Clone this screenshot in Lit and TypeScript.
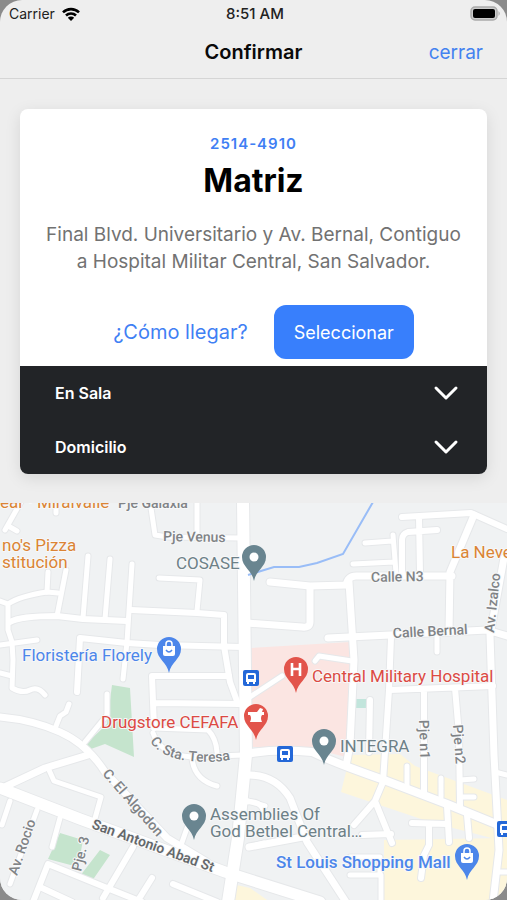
import { LitElement, html, svg, css } from "lit";
import { customElement, state } from "lit/decorators.js";

type Point = [number, number];

const ROADS: { w: number; d: string }[] = [
  // west blocks
  { w: 5, d: "M22 500 5 530M10 527 17 531M56 500V513M151 508 155 535 168 537 240 538M197 500V532" },
  { w: 5, d: "M88 556 83 618M110 559 105 619M132 564 127 642 123 679M48 572 47 592M66 570 57 616" },
  { w: 5, d: "M0 601 8 604Q20 596 47 592L58 593M8 604 8 630 12 642 13 660 12 688Q22 694 30 690T45 695" },
  { w: 6, d: "M10 622Q20 616 57 616L83 619 127 621M131 610 197 613 224 615V646L230 682 238 704" },
  { w: 5, d: "M159 578 200 580 197 611M0 645 37 640M0 673 12 676" },
  { w: 6, d: "M77 692 80 638 127 643 160 645 243 647M229 676H152L154 728M155 703 243 704" },
  { w: 5, d: "M154 728 208 730Q216 738 217 752M69 704 66 712 60 716 56 726M107 694V715L85 742" },
  { w: 5, d: "M153 733Q160 755 192 757L243 755M192 758Q194 780 217 786M187 828 180 848" },
  { w: 7, d: "M0 717Q33 720 60 732T105 772L167 838 207 862M0 789 45 768 88 755" },
  { w: 5, d: "M49 770 54 781 101 797 94 822M10 801 2 825M37 810 10 884M60 818 52 847" },
  { w: 6, d: "M33 902 48 864 107 888 142 902M42 888 72 902M133 847 103 898M152 878 137 902M173 884 217 902" },
  { w: 5, d: "M245 800 265 806M252 846 264 843M245 623H249" },
  // north-east blocks
  { w: 6, d: "M402 517 471 513 507 529M419 517 420 574M437 530 408 532Q402 534 402 540V574" },
  { w: 5, d: "M365 543 392 541M393 535 396 573M353 564 394 562M437 636V652M315 661 319 656 352 661" },
  { w: 7, d: "M474 515 450 572 449 632M270 582 310 586 346 585Q348 576 356 576H452" },
  { w: 7, d: "M310 587V622Q310 628 302 627L247 623M349 582 354 660 350 745 346 766" },
  { w: 7, d: "M504 558 490 635 494 755 499 850 493 902M328 638 390 635 487 630 507 636" },
  { w: 6, d: "M391 637 389 690 383 782 375 801 392 843M375 801 354 825M391 834 362 835" },
  { w: 6, d: "M390 690 493 686M424 690V795M455 688 459 735 460 806M370 700 369 752" },
  { w: 5, d: "M250 697 282 676M407 766V786M441 778V797M460 780 474 779M460 797H474" },
  // south-east blocks
  { w: 8, d: "M246 754Q277 748 312 752 335 763 384 780L447 804 496 824" },
  { w: 6, d: "M447 806 449 842M467 815 469 838M412 823 447 824M429 825V845L424 855 421 878" },
  { w: 7, d: "M247 775Q275 774 290 798L307 842 346 902M249 847 308 836" },
  { w: 5, d: "M247 802Q262 800 265 815M350 875H381V902M350 857H380V875M495 772 507 775M499 872H507" },
  // main avenues
  { w: 11, d: "M0 788 80 819 225 872 320 902" },
  { w: 12, d: "M243 500 246 755 238 838 228 902" },
];

const shopGlyph = svg`<path d="M-6-3H6V5Q6 7 4 7H-4Q-6 7-6 5Z" fill="#fff"/><path d="M-3-3V-5A3 3 0 0 1 3-5V-3" fill="none" stroke="#fff" stroke-width="1.5"/><path d="M-3 1Q0 5 3 1" fill="none" stroke="#4c86ea" stroke-width="1.4"/>`;
const dotGlyph = svg`<circle r="4.5" fill="#fff"/>`;
const hospitalGlyph = svg`<path d="M-4-6V7M4-6V7M-4 0H4" fill="none" stroke="#fff" stroke-width="2.6"/>`;
const mortarGlyph = svg`<path d="M-8-4H1L4-8 7-7 6-4H8V-1H6Q4 2 6 6H-6Q-4 2-6-1H-8Z" fill="#fff"/>`;

const PINS: { at: Point; color: string; glyph: unknown }[] = [
  { at: [254, 557], color: "#698590", glyph: dotGlyph },
  { at: [324, 741], color: "#698590", glyph: dotGlyph },
  { at: [194, 816], color: "#698590", glyph: dotGlyph },
  { at: [169, 649], color: "#4c86ea", glyph: shopGlyph },
  { at: [467, 856], color: "#4c86ea", glyph: shopGlyph },
  { at: [296, 669], color: "#e2544b", glyph: hospitalGlyph },
  { at: [256, 716], color: "#e2544b", glyph: mortarGlyph },
];

const STATIONS: Point[] = [[251, 678], [285, 754], [505, 829]];

const LABELS: { t: string; x: number; y: number; c: string; r?: number }[] = [
  { t: "ear · Miralvalle", x: 0, y: 508, c: "food" },
  { t: "Pje Galaxia", x: 118, y: 508, c: "street" },
  { t: "no's Pizza", x: 2, y: 551, c: "food" },
  { t: "stitución", x: 2, y: 568, c: "food" },
  { t: "La Neve", x: 451, y: 558, c: "food" },
  { t: "Pje Venus", x: 163, y: 541, c: "street", r: 1 },
  { t: "COSASE", x: 176, y: 569, c: "place" },
  { t: "Calle N3", x: 371, y: 582, c: "street", r: -1 },
  { t: "Calle Bernal", x: 393, y: 638, c: "street", r: -3 },
  { t: "Av. Izalco", x: 494, y: 633, c: "street", r: -84 },
  { t: "Floristería Florely", x: 22, y: 661, c: "shop" },
  { t: "Central Military Hospital", x: 312, y: 682, c: "health" },
  { t: "Drugstore CEFAFA", x: 101, y: 728, c: "health" },
  { t: "INTEGRA", x: 340, y: 752, c: "place" },
  { t: "Pje n1", x: 419, y: 720, c: "street", r: 88 },
  { t: "Pje n2", x: 453, y: 725, c: "street", r: 86 },
  { t: "Assemblies Of", x: 210, y: 820, c: "place" },
  { t: "God Bethel Central…", x: 210, y: 837, c: "place" },
  { t: "St Louis Shopping Mall", x: 276, y: 868, c: "shop strong" },
  { t: "C. El Algodon", x: 102, y: 774, c: "street", r: 49 },
  { t: "San Antonio Abad St", x: 91, y: 828, c: "avenue", r: 20 },
  { t: "Av. Rocio", x: 17, y: 876, c: "street", r: -71 },
  { t: "Pje. 3", x: 81, y: 872, c: "street", r: -76 },
];

@customElement("branch-map")
class BranchMap extends LitElement {
  static styles = css`
    :host { display: block; position: relative; overflow: hidden; background: #f0f2f3; }
    .map { position: absolute; inset: 0; width: 100%; height: 100%; }
    .casing { fill: none; stroke: #e6e8ea; stroke-linecap: round; stroke-linejoin: round; }
    .road { fill: none; stroke: #fff; stroke-linecap: round; stroke-linejoin: round; }
    .label {
      font: 400 17px Roboto, "Liberation Sans", sans-serif;
      paint-order: stroke;
      stroke: #f7f8f9;
      stroke-width: 2px;
      stroke-linejoin: round;
    }
    .food { fill: #db8434; }
    .shop { fill: #4c86ea; }
    .health { fill: #dc4a43; }
    .place { fill: #6d8087; }
    .street { fill: #808386; font-size: 14px; font-weight: 500; }
    .avenue { fill: #65686b; font-size: 14px; font-weight: 600; }
    .strong { font-weight: 500; }
  `;

  render() {
    return html`
      <svg class="map" viewBox="0 503 507 397" preserveAspectRatio="xMidYMin slice" role="img" aria-label="Mapa de la sucursal">
        <path fill="#fbe5e2" d="M251 648 350 642V758L310 748 251 747Z" />
        <path fill="#c5e4cd" d="M112 685 130 688 134 757 105 744 88 750 85 745 107 724ZM60 833 83 840 78 867 48 859ZM100 850 110 855 92 881 80 876Z" />
        <path fill="#c2e5dc" d="M356 699H367V708H356Z" />
        <path fill="#fdf6dc" d="M352 755 400 754 415 766 507 800V842L430 822 341 792 347 768ZM384 840 507 838V900H384ZM232 884 250 888 270 902H228Z" />
        ${ROADS.map((r) => svg`<path class="casing" stroke-width=${r.w + 2} d=${r.d} />`)}
        ${ROADS.map((r) => svg`<path class="road" stroke-width=${r.w} d=${r.d} />`)}
        <path fill="none" stroke="#99bdf7" stroke-width="2" d="M373 502 343 554 317 563 299 567H274L248 575" />
        ${STATIONS.map(
          ([x, y]) => svg`<g transform="translate(${x} ${y})">
            <rect x="-8" y="-8" width="16" height="16" rx="2" fill="#2468d8" />
            <path d="M-5 4V-3Q-5-5-3-5H3Q5-5 5-3V4H4V6H2V4H-2V6H-4V4Z" fill="#fff" />
            <path d="M-3-3H3V1H-3Z" fill="#2468d8" />
          </g>`
        )}
        ${LABELS.map(
          (l) => svg`<text class="label ${l.c}" transform="translate(${l.x} ${l.y}) rotate(${l.r ?? 0})">${l.t}</text>`
        )}
        <path id="teresa" fill="none" d="M150 741Q160 758 190 761T240 757" />
        <text class="label street"><textPath href="#teresa">C. Sta. Teresa</textPath></text>
        ${PINS.map(
          (p) => svg`<g transform="translate(${p.at[0]} ${p.at[1]})">
            <path d="M0 24C-2 13-12 10-12 0A12 12 0 0 1 12 0C12 10 2 13 0 24Z" fill=${p.color} />
            ${p.glyph}
          </g>`
        )}
      </svg>
    `;
  }
}

@customElement("app-root")
class AppRoot extends LitElement {
  @state() private open = "";

  static styles = css`
    :host { display: block; background: #8b8b8b; font-family: Inter, "Liberation Sans", sans-serif; }
    * { box-sizing: border-box; margin: 0; }
    button { font: inherit; border: 0; background: none; padding: 0; cursor: pointer; }
    .screen {
      display: flex; flex-direction: column; min-height: 100vh;
      background: #eee; border-radius: 22px; overflow: hidden;
    }
    .status {
      display: grid; grid-template-columns: 1fr auto 1fr; align-items: center;
      height: 27px; padding: 0 6px 0 9px; font-size: 14px; color: #222;
    }
    .carrier { display: flex; align-items: center; gap: 6px; }
    .time { font-size: 15px; font-weight: 500; }
    .battery { justify-self: end; }
    .nav {
      display: grid; grid-template-columns: 1fr auto 1fr; align-items: center;
      height: 52px; padding: 0 24px 1px; border-bottom: 1px solid #d5d5d5;
    }
    .title { grid-column: 2; font-size: 20px; font-weight: 600; color: #0a0a0a; }
    .close { justify-self: end; font-size: 19px; color: #4382f0; }
    .card {
      margin: 30px 20px 29px; border-radius: 8px; overflow: hidden; background: #fff;
      box-shadow: 0 4px 16px rgba(0, 0, 0, 0.1);
    }
    .info { display: flex; flex-direction: column; align-items: center; padding: 25px 24px 7px; text-align: center; }
    .phone { font-size: 15px; line-height: 20px; font-weight: 600; letter-spacing: 1px; color: #3f80f4; text-decoration: none; }
    .name { font-size: 32px; line-height: 40px; font-weight: 700; margin-top: 7px; color: #000; }
    .address { margin-top: 20px; font-size: 19px; line-height: 27px; color: #727272; }
    .actions { display: flex; align-items: center; gap: 26px; margin-top: 30px; padding-left: 20px; }
    .directions { font-size: 20px; color: #3f80f4; text-decoration: none; }
    .select { height: 54px; padding: 0 20px; border-radius: 12px; background: #387ffc; color: #fff; font-size: 18px; }
    .row {
      display: flex; align-items: center; justify-content: space-between;
      width: 100%; height: 54px; padding: 0 28px 0 35px;
      background: #222427; color: #fff; font-size: 16px; font-weight: 600;
    }
    .map { flex: 1 1 320px; }
  `;

  private row(name: string) {
    return html`
      <button
        class="row"
        aria-expanded=${this.open === name ? "true" : "false"}
        @click=${() => (this.open = this.open === name ? "" : name)}
      >
        <span>${name}</span>
        <svg width="26" height="16" viewBox="0 0 26 16" aria-hidden="true">
          <path d="M3 3 13 13 23 3" fill="none" stroke="#fff" stroke-width="3" stroke-linecap="round" stroke-linejoin="round" />
        </svg>
      </button>
    `;
  }

  render() {
    return html`
      <main class="screen">
        <div class="status">
          <span class="carrier">
            Carrier
            <svg width="20" height="14" viewBox="0 0 20 14" aria-hidden="true">
              <path d="M2 5.4A11.5 11.5 0 0 1 18 5.4M5 8.5A7.2 7.2 0 0 1 15 8.5" fill="none" stroke="#000" stroke-width="2.6" />
              <path d="M10 14 6.8 10.8A4.5 4.5 0 0 1 13.2 10.8Z" fill="#000" />
            </svg>
          </span>
          <span class="time">8:51 AM</span>
          <svg class="battery" width="31" height="15" viewBox="0 0 31 15" aria-hidden="true">
            <rect x="1" y="1" width="26" height="13" rx="4" fill="#ccc" stroke="#aaa" stroke-width="1.5" />
            <rect x="3" y="3" width="22" height="9" rx="2" fill="#000" />
            <path d="M28.500 5Q31 7.500 28.500 10Z" fill="#aaa" />
          </svg>
        </div>
        <header class="nav">
          <h1 class="title">Confirmar</h1>
          <button class="close">cerrar</button>
        </header>
        <section class="card">
          <div class="info">
            <a class="phone" href="tel:25144910">2514-4910</a>
            <h2 class="name">Matriz</h2>
            <p class="address">Final Blvd. Universitario y Av. Bernal, Contiguo a Hospital Militar Central, San Salvador.</p>
            <div class="actions">
              <a class="directions" href="#mapa">¿Cómo llegar?</a>
              <button class="select">Seleccionar</button>
            </div>
          </div>
          ${this.row("En Sala")} ${this.row("Domicilio")}
        </section>
        <branch-map class="map" id="mapa"></branch-map>
      </main>
    `;
  }
}
